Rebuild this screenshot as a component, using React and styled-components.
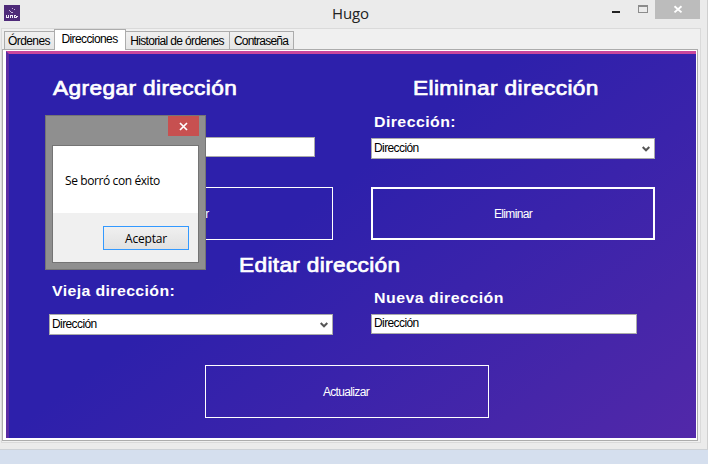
import React from "react";
import styled, { createGlobalStyle } from "styled-components";

const GlobalStyle = createGlobalStyle`
  * { box-sizing: border-box; }
  body { margin: 0; background: #d5dfee; overflow: hidden; }
  button, input { font: inherit; padding: 0; margin: 0; outline: none; border-radius: 0; }
`;

const Desktop = styled.div`
  position: relative;
  width: 708px;
  height: 464px;
  background: #d5dfee;
  font: 12px "Liberation Sans", Arial, sans-serif;
  color: #000;
`;

const Window = styled.div`
  width: 708px;
  height: 450px;
  display: flex;
  flex-direction: column;
  background: #ebebeb;
  border-right: 1px solid #cfcfcf;
  border-bottom: 1px solid #cdd1d6;
`;

const TitleBar = styled.header`
  height: 28px;
  flex: none;
  display: grid;
  grid-template-columns: 160px 1fr 160px;
  align-items: start;
`;

const AppIcon = styled.svg`
  display: block;
  margin: 5px 0 0 4px;
`;

const Title = styled.h1`
  margin: 4px 0 0;
  padding-right: 6px;
  font: 15px/18px "Open Sans", "Noto Sans", sans-serif;
  letter-spacing: -0.1px;
  text-align: center;
  color: #222;
`;

const Controls = styled.div`
  display: flex;
  justify-content: flex-end;
  padding-right: 7px;
`;

const ControlButton = styled.button`
  width: ${(p) => p.$width}px;
  height: 19px;
  border: 0;
  background: ${(p) => p.$bg || "transparent"};
  svg { display: block; }
`;

const Client = styled.main`
  margin-left: 1px;
  width: 700px;
  height: 415px;
  flex: none;
  padding: 2px 3px 0 0;
  border: 1px solid #dadada;
  background: #f0f0f0;
`;

const Tabs = styled.nav`
  height: 18px;
  padding-left: 2px;
  display: flex;
  align-items: flex-end;
`;

const Tab = styled.button`
  position: relative;
  width: ${(p) => p.$width}px;
  height: ${(p) => (p.$active ? 21 : 18)}px;
  margin-right: -1px;
  margin-bottom: ${(p) => (p.$active ? -1 : 0)}px;
  padding: 0 1px ${(p) => (p.$active ? 2 : 0)}px 0;
  border: 1px solid #acacac;
  border-bottom: 0;
  background: ${(p) => (p.$active ? "#fff" : "linear-gradient(#f0f0f0, #e5e5e5)")};
  z-index: ${(p) => (p.$active ? 1 : 0)};
  letter-spacing: ${(p) => p.$spacing}px;
  white-space: nowrap;
  color: #000;
`;

const TabPage = styled.section`
  width: 696px;
  height: 392px;
  padding: 1px 1px 2px 3px;
  border: 1px solid #acacac;
  background: #fff;
`;

const Canvas = styled.div`
  width: 690px;
  height: 387px;
  border-top: 3px solid #c9479c;
  border-left: 3px solid #5a2ca3;
  padding-left: 40px;
  background: linear-gradient(143deg, #2d20ab 0%, #2d20ab 42%, #3a23ab 64%, #4626a9 82%, #5228a9 100%);
`;

const Columns = styled.div`
  display: grid;
  grid-template-columns: 284px 284px;
  column-gap: 38px;
`;

const Column = styled.div`
  height: ${(p) => p.$height}px;
`;

const Heading = styled.h2`
  margin: ${(p) => p.$top || 0}px 0 0 ${(p) => p.$left || 0}px;
  font: 21px/24px "Liberation Sans", Arial, sans-serif;
  letter-spacing: ${(p) => p.$spacing}px;
  transform: scaleX(1.08);
  transform-origin: left;
  -webkit-text-stroke: 0.7px #fff;
  white-space: nowrap;
  color: #fff;
`;

const FieldLabel = styled.label`
  display: block;
  margin: ${(p) => p.$top}px 0 0 3px;
  height: 18px;
  font: bold 15px/18px "Liberation Sans", Arial, sans-serif;
  letter-spacing: ${(p) => p.$spacing}px;
  transform: scaleX(1.06);
  transform-origin: left;
  white-space: nowrap;
  color: #fff;
`;

const Field = styled.div`
  width: ${(p) => p.$width}px;
  height: ${(p) => p.$height}px;
  margin-top: ${(p) => p.$top}px;
  padding: 0 4px 2px 2px;
  display: flex;
  align-items: center;
  justify-content: space-between;
  border: 1px solid #aaa;
  background: #fff;
  letter-spacing: -0.6px;
`;

const ActionButton = styled.button`
  display: block;
  width: 284px;
  height: 53px;
  margin: ${(p) => p.$top}px 0 0 ${(p) => p.$left || 0}px;
  padding-right: ${(p) => p.$shift || 0}px;
  border: ${(p) => (p.$focused ? 2 : 1)}px solid #fff;
  background: transparent;
  color: #fff;
  letter-spacing: -0.65px;
`;

const Dialog = styled.div`
  position: absolute;
  left: 45px;
  top: 115px;
  width: 161px;
  height: 155px;
  border: 1px solid #747474;
  background: #8f8f8f;
  font: 12px "Open Sans", "Noto Sans", sans-serif;
`;

const DialogTitle = styled.div`
  height: 29px;
  display: flex;
  justify-content: flex-end;
  padding-right: 6px;
`;

const DialogClose = styled.button`
  width: 31px;
  height: 20px;
  border: 0;
  background: #c75050;
  svg { display: block; }
`;

const DialogBody = styled.div`
  margin-left: 6px;
  width: 147px;
  height: 118px;
  border: 1px solid #747474;
  background: #f0f0f0;
`;

const Message = styled.p`
  margin: 0;
  height: 67px;
  padding-left: 12px;
  line-height: 69px;
  background: #fff;
  white-space: nowrap;
  letter-spacing: ${(p) => p.$spacing}px;
`;

const AcceptButton = styled.button`
  display: block;
  width: 86px;
  height: 24px;
  margin: 13px 0 0 50px;
  border: 1px solid #3399ff;
  background: linear-gradient(#f0f0f0, #e1e1e1);
  letter-spacing: -0.2px;
  color: #000;
`;

const ChevronIcon = styled.svg`
  margin-top: 2px;
`;

const Chevron = () => (
  <ChevronIcon width="8" height="6" viewBox="0 0 8 6">
    <path d="M0.7 1 L4 4.3 L7.3 1" fill="none" stroke="#555" strokeWidth="2" />
  </ChevronIcon>
);

const tabs = [
  { name: "Órdenes", width: 51, spacing: -0.6 },
  { name: "Direcciones", width: 72, spacing: -0.6, active: true },
  { name: "Historial de órdenes", width: 105, spacing: -0.65 },
  { name: "Contraseña", width: 65, spacing: -0.8 },
];

export default function App() {
  return (
    <Desktop>
      <GlobalStyle />
      <Window>
        <TitleBar>
          <AppIcon width="16" height="16" viewBox="0 0 16 16" shapeRendering="crispEdges">
            <rect width="16" height="16" fill="#4e2a79" />
            <path d="M8 3h1v1h-1zM5 5h1v1h-1zM6 6h1v1h-1zM10 4h1v1h-1zM7 7h2v1h-2z" fill="#c6b5db" />
            <path d="M2 10h1v3h-1zM4 10h1v3h-1zM3 12h1v1h-1zM6 10h1v3h-1zM7 10h1v1h-1zM8 10h1v3h-1zM10 10h1v3h-1zM11 10h1v1h-1zM12 11h2v1h-2zM11 12h2v1h-2z" fill="#f0eaf7" />
          </AppIcon>
          <Title>Hugo</Title>
          <Controls>
            <ControlButton $width={26} aria-label="Minimizar">
              <svg width="26" height="19"><path d="M4 11h8v2h-8z" fill="#222" /></svg>
            </ControlButton>
            <ControlButton $width={21} aria-label="Maximizar">
              <svg width="21" height="19" shapeRendering="crispEdges">
                <path d="M4 5h10v8h-10zM5 7v5h8v-5z" fill="#8c8c8c" fillRule="evenodd" />
              </svg>
            </ControlButton>
            <ControlButton $width={45} $bg="#bcbcbc" aria-label="Cerrar">
              <svg width="45" height="19">
                <path d="M19.5 6.2l7 6.2M26.5 6.2l-7 6.2" stroke="#fff" strokeWidth="1.9" />
              </svg>
            </ControlButton>
          </Controls>
        </TitleBar>
        <Client>
          <Tabs>
            {tabs.map((t) => (
              <Tab key={t.name} $width={t.width} $spacing={t.spacing} $active={t.active}>
                {t.name}
              </Tab>
            ))}
          </Tabs>
          <TabPage>
            <Canvas>
              <Columns>
                <Column $height={186}>
                  <Heading $top={22} $left={4} $spacing={0.35}>Agregar dirección</Heading>
                  <Field $width={266} $height={20} $top={37} />
                  <ActionButton $top={30} $shift={3}>Agregar</ActionButton>
                </Column>
                <Column $height={186}>
                  <Heading $top={22} $left={42} $spacing={0.35}>Eliminar dirección</Heading>
                  <FieldLabel $top={13} $spacing={0.4}>Dirección:</FieldLabel>
                  <Field $width={284} $height={21} $top={7}>
                    <span>Dirección</span>
                    <Chevron />
                  </Field>
                  <ActionButton $top={28} $focused>Eliminar</ActionButton>
                </Column>
              </Columns>
              <Heading $top={13} $left={190} $spacing={0.3}>Editar dirección</Heading>
              <Columns>
                <Column $height={58}>
                  <FieldLabel $top={5} $spacing={0.35}>Vieja dirección:</FieldLabel>
                  <Field $width={284} $height={21} $top={14}>
                    <span>Dirección</span>
                    <Chevron />
                  </Field>
                </Column>
                <Column $height={58}>
                  <FieldLabel $top={12} $spacing={0.45}>Nueva dirección</FieldLabel>
                  <Field $width={266} $height={20} $top={7}>
                    <span>Dirección</span>
                  </Field>
                </Column>
              </Columns>
              <ActionButton $top={30} $left={156} $shift={2}>Actualizar</ActionButton>
            </Canvas>
          </TabPage>
        </Client>
      </Window>
      <Dialog role="dialog">
        <DialogTitle>
          <DialogClose aria-label="Cerrar">
            <svg width="31" height="20">
              <path d="M12 7l7 7M19 7l-7 7" stroke="#fff" strokeWidth="1.7" />
            </svg>
          </DialogClose>
        </DialogTitle>
        <DialogBody>
          <Message $spacing={-0.4}>Se borró con éxito</Message>
          <AcceptButton>Aceptar</AcceptButton>
        </DialogBody>
      </Dialog>
    </Desktop>
  );
}
